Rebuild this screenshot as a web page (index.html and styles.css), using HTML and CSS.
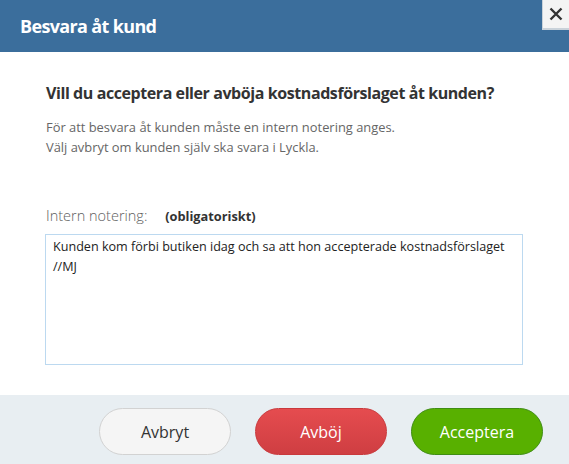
FILE: index.html
```html
<!DOCTYPE html>
<html lang="sv">
<head>
<meta charset="utf-8">
<link rel="stylesheet" href="styles.css">
</head>
<body>
<div class="dialog">
  <header class="dlg-header">
    <h1 class="dlg-title">Besvara åt kund</h1>
    <button class="close" aria-label="Stäng">
      <svg width="14" height="14" viewBox="0 0 14 14"><path d="M1.5 1.5 L12.5 12.5 M12.5 1.5 L1.5 12.5" stroke="#333" stroke-width="2.4" fill="none"/></svg>
    </button>
  </header>
  <main class="dlg-body">
    <h2 class="question">Vill du acceptera eller avböja kostnadsförslaget åt kunden?</h2>
    <p class="info">För att besvara åt kunden måste en intern notering anges.<br>Välj avbryt om kunden själv ska svara i Lyckla.</p>
    <label class="note-label">Intern notering: <span class="req">(obligatoriskt)</span></label>
    <div class="note">Kunden kom förbi butiken idag och sa att hon accepterade kostnadsförslaget<br>//MJ</div>
  </main>
  <footer class="dlg-footer">
    <button class="btn btn-cancel">Avbryt</button>
    <button class="btn btn-reject">Avböj</button>
    <button class="btn btn-accept">Acceptera</button>
  </footer>
</div>
</body>
</html>
```
FILE: styles.css
```css
* { box-sizing: border-box; }
html, body { margin: 0; padding: 0; background: #fff; }
body { font-family: "Open Sans", "Noto Sans", sans-serif; color: #333; width: 569px; height: 464px; overflow: hidden; }
.dialog { position: relative; display: flex; flex-direction: column; height: 464px; }
.dlg-header { height: 52px; background: #3b6e9c; display: flex; align-items: center; padding-left: 20px; }
.dlg-title { margin: 0; color: #fff; font-size: 18px; font-weight: 700; letter-spacing: -0.65px; }
.close { position: absolute; top: 0; right: 0; width: 27px; height: 30px; background: #f4f4f4; border: none; border-left: 1px solid #c9d2da; border-bottom: 2px solid #c9d2da; padding: 0; display: flex; align-items: center; justify-content: center; }
.dlg-body { flex: 1; padding: 29px 46px 0 46px; }
.question { margin: 0; font-size: 16px; font-weight: 700; color: #333; line-height: 24px; letter-spacing: -0.42px; }
.info { margin: 12px 0 0 0; font-size: 12.9px; line-height: 20px; color: #666; }
.note-label { display: block; margin-top: 49px; font-size: 14.5px; font-weight: 300; color: #5e5e5e; line-height: 20px; }
.req { font-size: 12.8px; font-weight: 700; color: #333; margin-left: 14px; }
.note { margin-top: 8px; width: 478px; height: 131px; margin-left: -1px; border: 1px solid #bcd9f0; padding: 2px 7px; font-size: 12.6px; line-height: 20px; color: #222; }
.dlg-footer { height: 69px; background: #e8eef2; display: flex; justify-content: flex-end; align-items: flex-start; gap: 24px; padding: 13px 26px 0 0; }
.btn { width: 132px; height: 47px; border-radius: 24px; font-family: inherit; font-size: 16px; padding: 0; }
.btn-cancel { background: #f5f5f5; border: 1px solid #d2d2d2; color: #333; }
.btn-reject { background: linear-gradient(#e54c4f, #cf3e42); border: 1px solid #c9393c; color: #fff; }
.btn-accept { background: #58b000; border: 1px solid #3f8d13; color: #fff; }
```
